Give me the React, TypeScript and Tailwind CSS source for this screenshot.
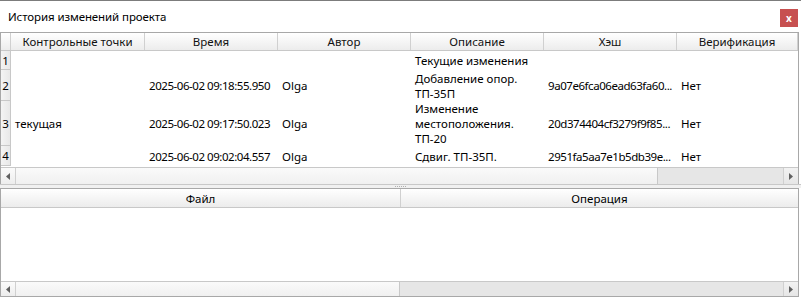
const cols = ["w-[134px]", "w-[133px]", "w-[133px]", "w-[133px]", "w-[133px]", "flex-1"];
const heads = ["Контрольные точки", "Время", "Автор", "Описание", "Хэш", "Верификация"];

const rows = [
  { n: "1", h: "h-[19px]", cells: ["", "", "", "Текущие изменения", "", ""] },
  { n: "2", h: "h-[31px]", cells: ["", "2025-06-02 09:18:55.950", "Olga", "Добавление опор.\nТП-35П", "9a07e6fca06ead63fa60...", "Нет"] },
  { n: "3", h: "h-[45px]", cells: ["текущая", "2025-06-02 09:17:50.023", "Olga", "Изменение\nместоположения.\nТП-20", "20d374404cf3279f9f85...", "Нет"] },
  { n: "4", h: "h-[20px]", cells: ["", "2025-06-02 09:02:04.557", "Olga", "Сдвиг. ТП-35П.", "2951fa5aa7e1b5db39e...", "Нет"] },
];

function cellClass(i: number) {
  if (i === 3) return "whitespace-pre-line";
  if (i === 1 || i === 4) return "whitespace-nowrap tracking-[-0.45px]";
  return "whitespace-nowrap";
}

function Arrow({ dir }: { dir: "l" | "r" }) {
  return (
    <svg width="4" height="7" viewBox="0 0 4 7">
      {dir === "l" ? <path d="M4 0 L0 3.5 L4 7 Z" fill="#606060" /> : <path d="M0 0 L4 3.5 L0 7 Z" fill="#606060" />}
    </svg>
  );
}

function HScroll({ thumb, h }: { thumb: string; h: string }) {
  return (
    <div className={`flex ${h} border-t border-[#c8c8c8] bg-[#e8e8e8]`}>
      <div className="flex w-[15px] items-center justify-center border-r border-[#d0d0d0] bg-gradient-to-b from-[#fbfbfb] to-[#ededed]">
        <Arrow dir="l" />
      </div>
      <div className={`${thumb} border-r border-[#c8c8c8] bg-gradient-to-b from-[#fafafa] to-[#f0f0f0]`} />
      <div className="flex-1 bg-[#e6e6e6]" />
      <div className="flex w-[15px] items-center justify-center border-l border-[#d0d0d0] bg-gradient-to-b from-[#f2f2f2] to-[#e6e6e6]">
        <Arrow dir="r" />
      </div>
    </div>
  );
}

export default function App() {
  return (
    <div className="flex h-[297px] w-[801px] flex-col border-t border-[#7c7c7c] bg-white font-['Noto_Sans',sans-serif] text-[11.5px] leading-[15px] text-black">
      <div className="flex h-[31px] items-center justify-between pl-[8px] pr-[3px]">
        <span className="tracking-[-0.1px]">История изменений проекта</span>
        <div className="mt-[2px] flex h-[18px] w-[18px] items-center justify-center bg-[#c75050] text-[10px] font-bold leading-none text-white">
          x
        </div>
      </div>

      <div className="flex h-[152px] w-[799px] flex-col border border-b-0 border-[#a8a8a8]">
        <div className="flex h-[18px] border-b border-[#c8c8c8] bg-gradient-to-b from-[#ffffff] to-[#ececec]">
          <div className="w-[10px] border-r border-[#d0d0d0]" />
          {heads.map((h, i) => (
            <div key={h} className={`${cols[i]} flex items-center justify-center border-r border-[#d0d0d0] text-[#111]`}>
              {h}
            </div>
          ))}
        </div>
        <div className="flex-1">
          {rows.map((r) => (
            <div key={r.n} className={`flex ${r.h}`}>
              <div className="flex w-[10px] items-center justify-center border-b border-r border-[#c8c8c8] bg-gradient-to-r from-[#f4f4f4] to-[#e8e8e8]">
                {r.n}
              </div>
              {r.cells.map((c, i) => (
                <div key={i} className={`${cols[i]} flex items-center overflow-hidden pl-[4px] ${cellClass(i)}`}>
                  {c}
                </div>
              ))}
            </div>
          ))}
        </div>
        <HScroll thumb="w-[642px]" h="h-[17px]" />
      </div>

      <div className="relative flex h-[4px] items-center justify-center border-t border-[#c8c8c8] bg-[#f0f0f0]">
        <div className="flex gap-[1px]">
          {[0, 1, 2, 3, 4, 5].map((d) => (
            <div key={d} className="h-[1px] w-[1px] bg-[#b0b0b0]" />
          ))}
        </div>
      </div>

      <div className="flex w-[799px] flex-1 flex-col border border-[#a8a8a8]">
        <div className="flex h-[19px] border-b border-[#c8c8c8] bg-gradient-to-b from-[#ffffff] to-[#ececec]">
          <div className="flex w-[400px] items-center justify-center border-r border-[#d0d0d0]">Файл</div>
          <div className="flex flex-1 items-center justify-center">Операция</div>
        </div>
        <div className="flex-1" />
        <HScroll thumb="w-[384px]" h="h-[15px]" />
      </div>
    </div>
  );
}
